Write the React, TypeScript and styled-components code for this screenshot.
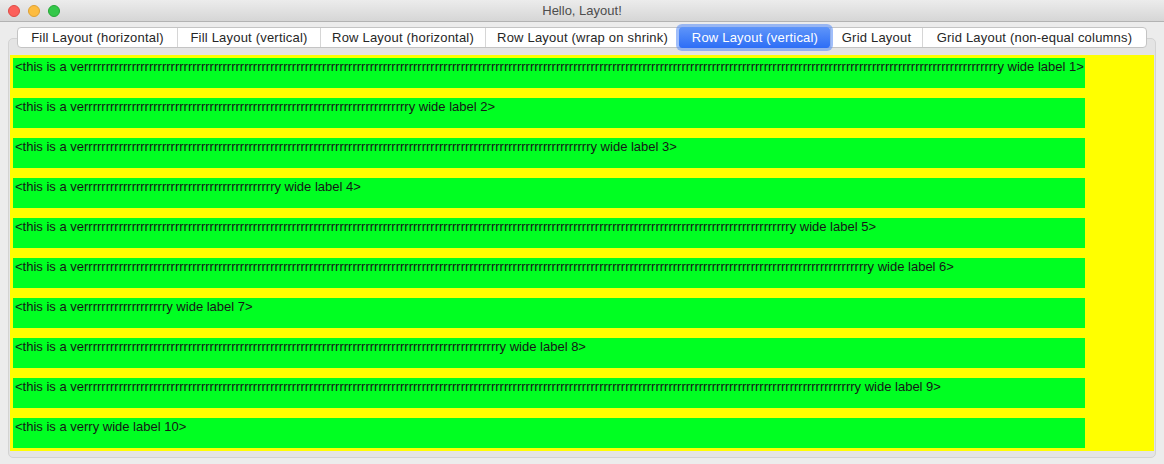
import styled, { createGlobalStyle } from 'styled-components'

const GlobalStyle = createGlobalStyle`
  html, body {
    margin: 0;
    padding: 0;
    background: #ececec;
  }
  body {
    font-family: "Liberation Sans", Arial, sans-serif;
    font-size: 13px;
    color: #1b1b1b;
  }
`

const Window = styled.div`
  width: 1164px;
  height: 464px;
  background: #ececec;
  overflow: hidden;
  display: flex;
  flex-direction: column;
`

const TitleBar = styled.div`
  height: 22px;
  flex: none;
  display: flex;
  align-items: center;
  position: relative;
  background: linear-gradient(#ececec, #d6d6d6);
  border-bottom: 1px solid #b3b3b3;
  box-sizing: border-box;
`

const Lights = styled.div`
  display: flex;
  gap: 8px;
  padding-left: 8px;
`

const Light = styled.span<{ $fill: string; $edge: string }>`
  width: 12px;
  height: 12px;
  border-radius: 50%;
  box-sizing: border-box;
  background: ${(p) => p.$fill};
  border: 1px solid ${(p) => p.$edge};
`

const Title = styled.div`
  position: absolute;
  left: 0;
  right: 0;
  text-align: center;
  color: #4d4d4d;
  font-size: 13px;
  pointer-events: none;
`

const TabBar = styled.div`
  display: flex;
  justify-content: center;
  margin-top: 5px;
  margin-bottom: -10px;
  position: relative;
  z-index: 1;
`

const Segments = styled.div`
  display: flex;
  height: 21px;
  background: #fff;
  border: 1px solid #c4c4c4;
  border-radius: 4px;
  box-sizing: border-box;
`

const Segment = styled.div<{ $w: number; $active?: boolean }>`
  width: ${(p) => p.$w}px;
  box-sizing: border-box;
  display: flex;
  align-items: center;
  justify-content: center;
  white-space: nowrap;
  font-size: 13px;
  letter-spacing: 0.2px;
  color: ${(p) => (p.$active ? '#fff' : '#262626')};
  border-left: 1px solid ${(p) => (p.$active ? 'transparent' : '#d6d6d6')};
  &:first-child {
    border-left: none;
  }
  ${(p) =>
    p.$active &&
    `
    background: linear-gradient(#5f95f9, #2d6ef6);
    border-radius: 3px;
    margin: -1px 0;
    box-shadow: 0 0 0 3px rgba(96, 146, 246, 0.6);
    position: relative;
    z-index: 1;
  `}
`

const Panel = styled.div`
  margin: 0 8px;
  height: 420px;
  box-sizing: border-box;
  background: #e4e4e4;
  border: 1px solid #d3d3d3;
  border-radius: 5px;
  padding: 16px 1px 0 1px;
`

const Yellow = styled.div`
  background: #ffff00;
  padding: 3px;
  display: flex;
  flex-direction: column;
  gap: 10px;
`

const Label = styled.div`
  width: 1072px;
  height: 30px;
  box-sizing: border-box;
  background: #00ff22;
  padding: 1px 0 0 2px;
  line-height: 15px;
  white-space: nowrap;
  overflow: hidden;
  color: #161616;
`

const tabs = [
  { text: 'Fill Layout (horizontal)', w: 159 },
  { text: 'Fill Layout (vertical)', w: 143 },
  { text: 'Row Layout (horizontal)', w: 165 },
  { text: 'Row Layout (wrap on shrink)', w: 194 },
  { text: 'Row Layout (vertical)', w: 151, active: true },
  { text: 'Grid Layout', w: 92 },
  { text: 'Grid Layout (non-equal columns)', w: 224 },
]

const rCounts = [211, 75, 117, 44, 163, 181, 19, 96, 178, 2]

const App = () => {
  return (
    <>
      <GlobalStyle />
      <Window>
        <TitleBar>
          <Lights>
            <Light $fill="#fc605b" $edge="#de4b45" />
            <Light $fill="#fdbc40" $edge="#dea033" />
            <Light $fill="#34c84a" $edge="#25a636" />
          </Lights>
          <Title>Hello, Layout!</Title>
        </TitleBar>
        <TabBar>
          <Segments>
            {tabs.map((t) => (
              <Segment key={t.text} $w={t.w} $active={t.active}>
                {t.text}
              </Segment>
            ))}
          </Segments>
        </TabBar>
        <Panel>
          <Yellow>
            {rCounts.map((n, i) => (
              <Label key={i}>
                {`<this is a ve${'r'.repeat(n)}y wide label ${i + 1}>`}
              </Label>
            ))}
          </Yellow>
        </Panel>
      </Window>
    </>
  )
}

export default App
